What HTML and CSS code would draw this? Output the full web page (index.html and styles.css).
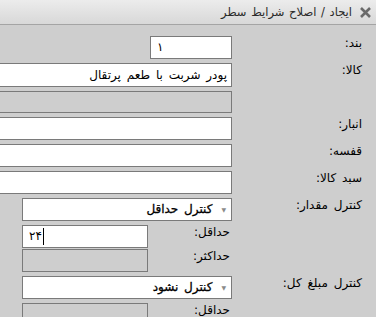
FILE: index.html
```html
<!DOCTYPE html>
<html lang="fa" dir="rtl">
<head>
  <meta charset="UTF-8">
  <title>ایجاد / اصلاح شرایط سطر</title>
  <link rel="stylesheet" href="styles.css">
</head>
<body>
  <!-- Title bar -->
  <div class="titlebar">
    <svg class="close-icon" width="13" height="11" viewBox="0 0 13 11">
      <path d="M2 1 L11 10 M11 1 L2 10" stroke="#6a6a6a" stroke-width="2.6" fill="none"/>
    </svg>
    <span class="title">ایجاد / اصلاح شرایط سطر</span>
  </div>

  <!-- Form -->
  <div class="form">
    <div class="label">بند:</div>
    <div class="field field-short ltr">۱</div>

    <div class="label">کالا:</div>
    <div class="field field-wide field-tall">پودر شربت با طعم پرتقال</div>

    <div class="label"></div>
    <div class="field field-wide field-low disabled"></div>

    <div class="label">انبار:</div>
    <div class="field field-wide"></div>

    <div class="label">قفسه:</div>
    <div class="field field-wide"></div>

    <div class="label">سبد کالا:</div>
    <div class="field field-wide"></div>

    <div class="label">کنترل مقدار:</div>
    <div class="field select"><span class="arrow">▼</span><span class="select-text">کنترل حداقل</span></div>

    <div class="label"></div>
    <div class="sub-group">
      <div class="sub-row">
        <div class="sub-label">حداقل:</div>
        <div class="field field-sub ltr">۲۴<span class="caret"></span></div>
      </div>
      <div class="sub-row">
        <div class="sub-label">حداکثر:</div>
        <div class="field field-sub disabled"></div>
      </div>
    </div>

    <div class="label">کنترل مبلغ کل:</div>
    <div class="field select"><span class="arrow">▼</span><span class="select-text">کنترل نشود</span></div>

    <div class="label"></div>
    <div class="sub-group">
      <div class="sub-row">
        <div class="sub-label">حداقل:</div>
        <div class="field field-sub disabled"></div>
      </div>
    </div>
  </div>
</body>
</html>
```

FILE: styles.css
```css
body {
  margin: 0;
  width: 376px;
  height: 317px;
  overflow: hidden;
  background-color: #cecece; /* dialog gray */
  font-family: "DejaVu Sans", sans-serif;
  font-size: 12px;
  word-spacing: 2px;
  color: #000;
}

/* Title bar */
.titlebar {
  height: 24px;
  display: flex;
  align-items: center;
  gap: 7px;
  padding-right: 4px;
  background: linear-gradient(#ececec, #d8d8d8);
  border-bottom: 1px solid #a4a4a4;
}

.close-icon {
  margin-top: 1px;
}

.title {
  color: #2a2a2a;
  font-size: 11.5px;
  word-spacing: 1px;
}

/* Form grid */
.form {
  display: grid;
  grid-template-columns: 144px 232px;
  row-gap: 4px;
  padding-top: 11px;
}

.label {
  padding-right: 14px;
  line-height: 15px;
  white-space: nowrap;
}

.field {
  box-sizing: border-box;
  height: 23px;
  background-color: #fff;
  border: 1px solid #7a7a7a;
  line-height: 21px;
  padding: 0 4px;
  white-space: nowrap;
  overflow: hidden;
}

.field-short {
  width: 82px;
}

.field-wide {
  width: 250px;
}

.field-tall {
  height: 24px;
  line-height: 22px;
}

.field-low {
  height: 22px;
}

.disabled {
  background-color: #cecece;
}

.ltr {
  direction: ltr;
  text-align: left;
  padding-left: 6px;
}

/* Dropdowns */
.select {
  width: 210px;
  display: flex;
  align-items: center;
  padding-right: 5px;
}

.arrow {
  font-size: 6px;
  color: #8a8a8a;
  margin-left: 9px;
}

.select-text {
  -webkit-text-stroke: 0.3px #000;
}

/* Nested min / max rows */
.sub-group {
  display: flex;
  flex-direction: column;
  gap: 1px;
}

.sub-row {
  display: flex;
}

.sub-label {
  width: 84px;
  box-sizing: border-box;
  padding-right: 2px;
  line-height: 14px;
}

.field-sub {
  width: 126px;
}

.caret {
  display: inline-block;
  width: 1px;
  height: 17px;
  background-color: #000;
  vertical-align: middle;
  margin-left: 1px;
}
```
